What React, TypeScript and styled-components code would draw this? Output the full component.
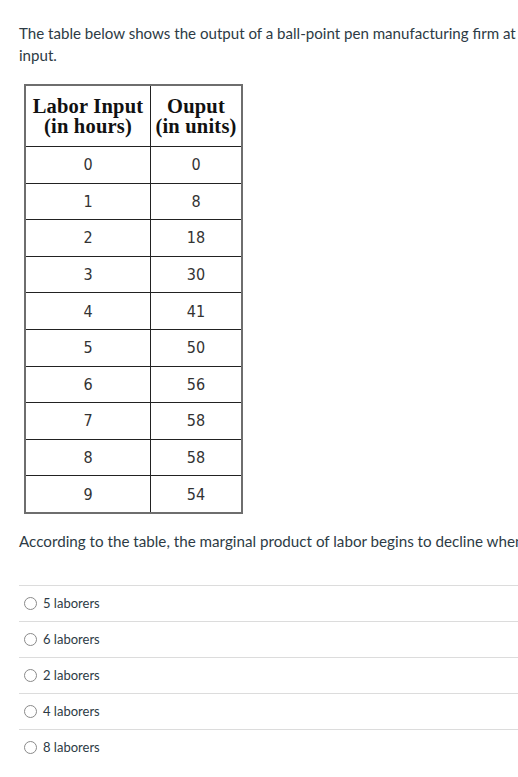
import styled, { createGlobalStyle } from "styled-components";

const GlobalStyle = createGlobalStyle`
  html, body {
    margin: 0;
    padding: 0;
    background: #ffffff;
    overflow: hidden;
  }
`

const rows: [number, number][] = [
    [0, 0], [1, 8], [2, 18], [3, 30], [4, 41],
    [5, 50], [6, 56], [7, 58], [8, 58], [9, 54],
]

const answers = ['5 laborers', '6 laborers', '2 laborers', '4 laborers', '8 laborers']

export default function App()
{
    return (
        <Page>
            <GlobalStyle/>

            <Intro>
                The table below shows the output of a ball-point pen manufacturing firm at<br/>
                input.
            </Intro>

            <TableWrap>
                <DataTable>
                    <thead>
                    <tr>
                        <HeadCell $w={124}>Labor Input<br/>(in hours)</HeadCell>
                        <HeadCell $w={90}>Ouput<br/>(in units)</HeadCell>
                    </tr>
                    </thead>
                    <tbody>
                    {rows.map(([hours, units]) => (
                        <tr key={hours}>
                            <NumCell>{hours}</NumCell>
                            <NumCell>{units}</NumCell>
                        </tr>
                    ))}
                    </tbody>
                </DataTable>
            </TableWrap>

            <Question>
                According to the table, the marginal product of labor begins to decline when
            </Question>

            <Answers>
                {answers.map((a) => (
                    <Answer key={a}>
                        <Radio/>
                        <AnswerText>{a}</AnswerText>
                    </Answer>
                ))}
            </Answers>
        </Page>
    )
}

const Page = styled.div`
  padding: 22px 0 0 19px;
  font-family: Lato, "Open Sans", sans-serif;
  color: #2d3b45;
  width: 700px;
`

const Intro = styled.p`
  margin: 0;
  font-size: 15.1px;
  line-height: 22px;
  white-space: nowrap;
`

const TableWrap = styled.div`
  margin: 18px 0 0 5px;
`

const DataTable = styled.table`
  border-collapse: collapse;
  border: 2px solid #6e6e6e;
  width: 214px;
  table-layout: fixed;
`

const HeadCell = styled.th<{ $w: number }>`
  width: ${(p) => p.$w}px;
  height: 60px;
  padding: 0;
  border: 1px solid #222;
  font-family: "Liberation Serif", "Times New Roman", serif;
  font-weight: bold;
  font-size: 20.5px;
  line-height: 20px;
  color: #111;
  text-align: center;
  white-space: nowrap;
  letter-spacing: 0.2px;
`

const NumCell = styled.td`
  height: 35.6px;
  padding: 0;
  border: 1px solid #222;
  text-align: center;
  font-family: "Liberation Sans Narrow", "DejaVu Sans Condensed", "Liberation Sans", sans-serif;
  font-size: 16px;
  color: #333;
`

const Question = styled.p`
  margin: 16px 0 0;
  font-size: 15.2px;
  line-height: 22px;
  white-space: nowrap;
`

const Answers = styled.div`
  margin-top: 33px;
  display: flex;
  flex-direction: column;
`

const Answer = styled.label`
  display: flex;
  align-items: center;
  gap: 6px;
  height: 36px;
  border-top: 1px solid #dcdcdc;
  padding-left: 5px;
  box-sizing: border-box;
`

const Radio = styled.span`
  width: 11px;
  height: 11px;
  border-radius: 50%;
  border: 1px solid #8a8a8a;
  background: #fff;
  flex-shrink: 0;
`

const AnswerText = styled.span`
  font-size: 13px;
  color: #2d3b45;
`
